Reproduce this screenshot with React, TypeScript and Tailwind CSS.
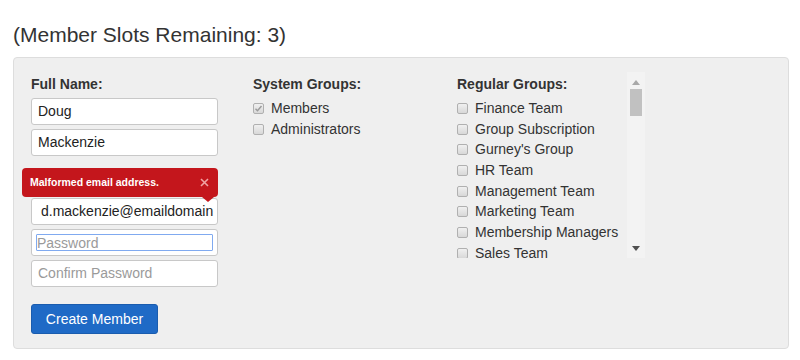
import { useState } from "react";

const systemGroups = [
  { name: "Members", checked: true },
  { name: "Administrators", checked: false },
];

const regularGroups = [
  "Finance Team",
  "Group Subscription",
  "Gurney's Group",
  "HR Team",
  "Management Team",
  "Marketing Team",
  "Membership Managers",
  "Sales Team",
];

function Checkbox({ checked }: { checked?: boolean }) {
  return (
    <span className="relative inline-block w-[11px] h-[11px] shrink-0 rounded-[2px] border border-[#b0b0b0] bg-gradient-to-b from-[#f0f0f0] to-[#d8d8d8]">
      {checked && (
        <svg viewBox="0 0 11 11" className="absolute -left-px -top-px w-[11px] h-[11px]">
          <path d="M2.5 5.8 L4.5 7.8 L8.5 3" fill="none" stroke="#9a9a9a" strokeWidth="1.4" />
        </svg>
      )}
    </span>
  );
}

function TextInput({ value, placeholder, className = "" }: { value?: string; placeholder?: string; className?: string }) {
  return (
    <div
      className={`mt-[4px] h-[27px] w-[187px] rounded-[3px] border border-[#c8c8c8] bg-white flex items-center overflow-hidden whitespace-nowrap text-[14px] ${className}`}
    >
      {value ? <span className="text-[#222]">{value}</span> : <span className="text-[#9a9a9a]">{placeholder}</span>}
    </div>
  );
}

function App() {
  const [error, setError] = useState(true);

  return (
    <div className="w-[800px] h-[360px] bg-white text-[#333] font-['Liberation_Sans',Arial,sans-serif] overflow-hidden">
      <h3 className="pl-[13px] pt-[22px] text-[21px] leading-[26px] font-normal">(Member Slots Remaining: 3)</h3>

      <div className="ml-[13px] mt-[9px] w-[776px] rounded-[4px] border border-[#dddddd] bg-[#efefef] pl-[17px] pt-[14px] pb-[14px] flex">
        {/* Member details */}
        <div className="w-[222px] flex flex-col">
          <div className="mt-[2px] text-[14px] leading-[20px] font-bold">Full Name:</div>
          <TextInput value="Doug" className="pl-[6px]" />
          <TextInput value="Mackenzie" className="pl-[6px]" />

          {error && (
            <div className="relative mt-[12px] -ml-[9px] w-[196px] h-[29px] rounded-[4px] bg-[#c4161c] flex items-center justify-between pl-[8px] pr-[9px]">
              <span className="text-white font-bold text-[10.5px]">Malformed email address.</span>
              <button onClick={() => setError(false)} className="w-[9px] h-[9px]">
                <svg viewBox="0 0 9 9" className="w-[9px] h-[9px]">
                  <path d="M1 1 L8 8 M8 1 L1 8" stroke="#f0a3a3" strokeWidth="1.6" />
                </svg>
              </button>
              <span className="absolute left-[180px] -bottom-[5px] w-0 h-0 border-l-[6px] border-r-[6px] border-t-[5px] border-l-transparent border-r-transparent border-t-[#c4161c]" />
            </div>
          )}

          <div className={`${error ? "mt-[1px]" : "mt-[4px]"} h-[27px] w-[187px] rounded-[3px] border border-[#c8c8c8] bg-white flex items-center pl-[9px] overflow-hidden whitespace-nowrap text-[14px] text-[#222]`}>
            d.mackenzie@emaildomain
          </div>

          <div className="mt-[4px] h-[27px] w-[187px] rounded-[3px] border border-[#c8c8c8] bg-white p-[4px]">
            <div className="h-full w-full border border-[#80aaf0] rounded-[1px] flex items-center text-[14px] text-[#9a9a9a] leading-none">
              Password
            </div>
          </div>
          <TextInput placeholder="Confirm Password" className="pl-[6px]" />

          <button className="mt-[17px] h-[30px] w-[127px] rounded-[3px] border border-[#1a5cae] bg-[#1f6ac6] text-white text-[14px]">
            Create Member
          </button>
        </div>

        {/* System groups */}
        <div className="w-[194px]">
          <div className="mt-[2px] text-[14px] leading-[20px] font-bold">System Groups:</div>
          <div className="mt-[4px]">
            {systemGroups.map((g) => (
              <label key={g.name} className="flex items-center gap-[7px] h-[20.7px] text-[14px]">
                <Checkbox checked={g.checked} />
                <span>{g.name}</span>
              </label>
            ))}
          </div>
        </div>

        {/* Regular groups, scrolling list */}
        <div className="relative w-[198px] h-[186px] overflow-hidden">
          <div className="pl-[10px]">
            <div className="mt-[2px] text-[14px] leading-[20px] font-bold">Regular Groups:</div>
            <div className="mt-[4px]">
              {regularGroups.map((g) => (
                <label key={g} className="flex items-center gap-[7px] h-[20.7px] text-[14px] whitespace-nowrap">
                  <Checkbox />
                  <span>{g}</span>
                </label>
              ))}
            </div>
          </div>

          <div className="absolute right-0 top-0 h-full w-[18px] bg-[#f3f3f3] flex flex-col items-center">
            <svg viewBox="0 0 8 5" className="mt-[8px] w-[8px] h-[5px]">
              <path d="M0 5 L4 0 L8 5 Z" fill="#a8a8a8" />
            </svg>
            <div className="mt-[4px] w-[12px] h-[27px] bg-[#c1c1c1]" />
            <div className="flex-1" />
            <svg viewBox="0 0 8 5" className="mb-[7px] w-[8px] h-[5px]">
              <path d="M0 0 L8 0 L4 5 Z" fill="#505050" />
            </svg>
          </div>
        </div>
      </div>
    </div>
  );
}

export default App;
